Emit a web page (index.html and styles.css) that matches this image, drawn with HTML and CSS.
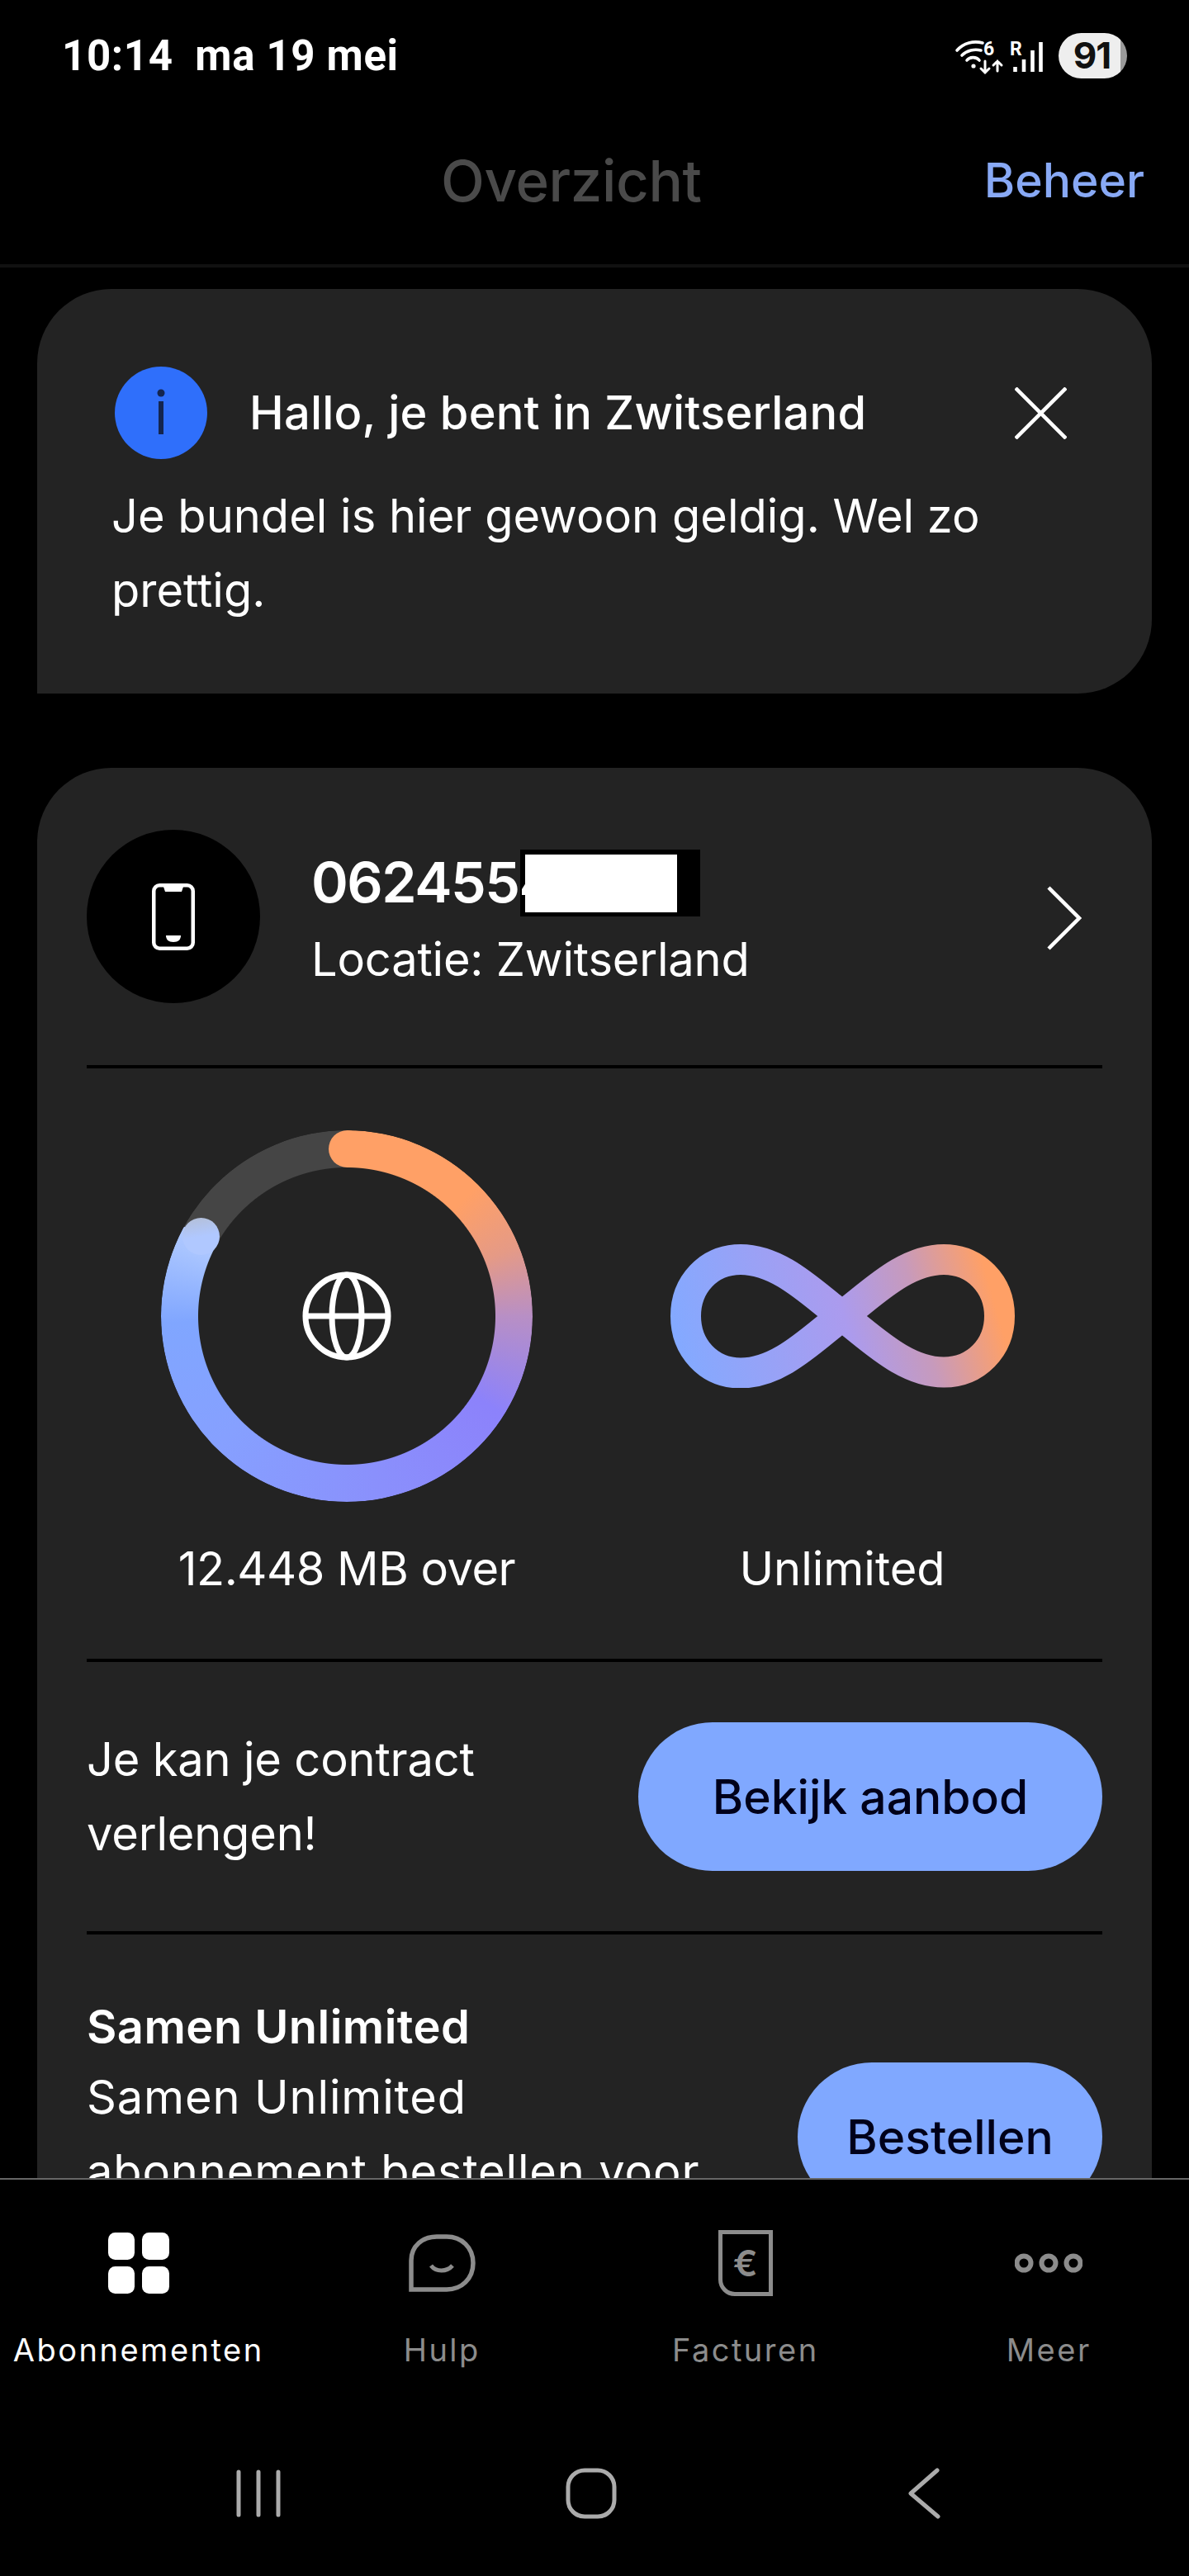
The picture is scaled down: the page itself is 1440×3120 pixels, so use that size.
FILE: index.html
```html
<!DOCTYPE html>
<html lang="nl">
<head>
<meta charset="utf-8">
<title>Overzicht</title>
<link rel="stylesheet" href="styles.css">
</head>
<body>
<div class="app">
  <header class="status">
    <span class="clock">10:14  ma 19 mei</span>
    <div class="status-right">
      <svg class="net" width="116" height="52" viewBox="1152 40 116 52" fill="none" stroke="#fff" stroke-linecap="round">
        <path d="M1158 59C1166 50 1178 47 1189 50" stroke-width="3.6"/>
        <path d="M1164 65C1170 59 1179 57 1187 59" stroke-width="3.6"/>
        <path d="M1170 71C1173 67 1181 66 1185 71" stroke-width="3.6"/>
        <circle cx="1178" cy="78" r="2.6" fill="#fff" stroke="none"/>
        <path d="M1192 72V86M1187 81L1192 86L1197 81" stroke-width="3"/>
        <path d="M1207 84V72M1202 77L1207 72L1212 77" stroke-width="3"/>
        <text class="net-text" x="1190" y="65">6</text>
        <text class="net-text" x="1222" y="65">R</text>
        <path d="M1228.500 79V85M1239 70V85M1249.500 59V85M1259.500 49V85" stroke-width="4.600" stroke-linecap="butt"/>
      </svg>
      <span class="battery">91</span>
    </div>
  </header>

  <div class="topbar">
    <h1 class="page-title">Overzicht</h1>
    <a class="manage">Beheer</a>
  </div>

  <main class="content">
    <section class="card notice">
      <div class="notice-head">
        <svg class="info" width="112" height="112" viewBox="0 0 112 112">
          <circle cx="56" cy="56" r="56" fill="#2f6ffb"/>
          <circle cx="56" cy="32" r="4.500" fill="#14254f"/>
          <rect x="53" y="42" width="6" height="40" fill="#14254f"/>
        </svg>
        <h2 class="notice-title">Hallo, je bent in Zwitserland</h2>
        <svg class="close" width="63" height="63" viewBox="0 0 63 63" fill="none" stroke="#fff" stroke-width="4.500">
          <path d="M1 1L62 62M62 1L1 62"/>
        </svg>
      </div>
      <p class="notice-text">Je bundel is hier gewoon geldig. Wel zo prettig.</p>
    </section>

    <section class="card plan">
      <div class="line-row">
        <div class="avatar">
          <svg width="52" height="81" viewBox="0 0 52 81" fill="none" stroke="#fff" stroke-width="4.500">
            <rect x="2.250" y="2.250" width="47.500" height="76.500" rx="7"/>
            <path d="M14 4H38L36 10H16Z" fill="#fff" stroke="none"/>
            <path d="M17 63H35C35 68 32 71 26 71C20 71 17 68 17 63Z" fill="#fff" stroke="none"/>
          </svg>
        </div>
        <div class="line-info">
          <div class="number"><span class="redact-back"></span>0624554<span class="redact-front"></span></div>
          <div class="location">Locatie: Zwitserland</div>
        </div>
        <svg class="chevron" width="42" height="78" viewBox="0 0 42 78" fill="none" stroke="#fff" stroke-width="4.500">
          <path d="M2 2L39 39L2 76"/>
        </svg>
      </div>

      <div class="usage">
        <div class="meter">
          <div class="meter-visual">
            <div class="ring">
              <div class="ring-track"></div>
              <span class="cap cap-start"></span>
              <span class="cap cap-end"></span>
              <svg class="globe" width="108" height="108" viewBox="0 0 108 108" fill="none" stroke="#fff" stroke-width="7">
                <circle cx="54" cy="54" r="50"/>
                <ellipse cx="54" cy="54" rx="18" ry="50"/>
                <path d="M4 54H104"/>
              </svg>
            </div>
          </div>
          <div class="meter-label meter-label-tight">12.448 MB over</div>
        </div>
        <div class="meter">
          <div class="meter-visual">
            <svg width="417" height="174" viewBox="812 1506 417 174" fill="none">
              <defs>
                <linearGradient id="inf" gradientUnits="userSpaceOnUse" x1="830" y1="1650" x2="1215" y2="1540">
                  <stop offset="0" stop-color="#84a9ff"/>
                  <stop offset="0.5" stop-color="#ab9bee"/>
                  <stop offset="0.72" stop-color="#c79abc"/>
                  <stop offset="0.95" stop-color="#ffa066"/>
                  <stop offset="1" stop-color="#ffa066"/>
                </linearGradient>
              </defs>
              <path stroke="url(#inf)" stroke-width="37" d="M1020 1593C985 1567 945 1524.500 897 1524.500C858 1524.500 830.500 1555 830.500 1593C830.500 1631 858 1662 897 1662C945 1662 985 1619 1020 1593C1055 1567 1095 1524.500 1143 1524.500C1182 1524.500 1210.500 1555 1210.500 1593C1210.500 1631 1182 1661 1143 1661C1095 1661 1055 1619 1020 1593Z"/>
            </svg>
          </div>
          <div class="meter-label">Unlimited</div>
        </div>
      </div>

      <div class="promo">
        <p class="promo-text">Je kan je contract<br>verlengen!</p>
        <a class="btn btn-wide">Bekijk aanbod</a>
      </div>

      <div class="offer">
        <div class="offer-text">
          <div class="offer-title">Samen Unlimited</div>
          <p class="offer-desc">Samen Unlimited<br>abonnement bestellen voor</p>
        </div>
        <a class="btn btn-order">Bestellen</a>
      </div>
    </section>
  </main>

  <footer class="bottom">
    <nav class="tabs">
      <a class="tab tab-active">
        <span class="tab-icon">
          <svg width="74" height="74" viewBox="0 0 74 74" fill="#fff">
            <rect width="32" height="33" rx="8.500"/>
            <rect x="41" width="33" height="33" rx="8.500"/>
            <rect y="41" width="32" height="33" rx="8.500"/>
            <rect x="41" y="41" width="33" height="33" rx="8.500"/>
          </svg>
        </span>
        Abonnementen
      </a>
      <a class="tab">
        <span class="tab-icon">
          <svg width="81" height="70" viewBox="0 0 81 70" fill="none" stroke="#8c8c8c" stroke-width="5.500">
            <path d="M3 67V32C3 14 17 3 34 3H46C64 3 78 16 78 35C78 54 64 67 46 67Z"/>
            <path d="M27 38C33 46 46 46 53 38" stroke-width="5"/>
          </svg>
        </span>
        Hulp
      </a>
      <a class="tab">
        <span class="tab-icon">
          <span class="invoice">€</span>
        </span>
        Facturen
      </a>
      <a class="tab">
        <span class="tab-icon">
          <svg width="82" height="24" viewBox="0 0 82 24" fill="none" stroke="#8c8c8c" stroke-width="6">
            <circle cx="11" cy="12" r="8.500"/>
            <circle cx="41" cy="12" r="8.500"/>
            <circle cx="71" cy="12" r="8.500"/>
          </svg>
        </span>
        Meer
      </a>
    </nav>
    <div class="sysnav">
      <svg width="54" height="58" viewBox="0 0 54 58" fill="none" stroke="#ababab" stroke-width="5" stroke-linecap="round">
        <path d="M3 3V55M27 3V55M51 3V55"/>
      </svg>
      <svg width="62" height="62" viewBox="0 0 62 62" fill="none" stroke="#ababab" stroke-width="5">
        <rect x="3" y="3" width="56" height="56" rx="20"/>
      </svg>
      <svg width="40" height="62" viewBox="0 0 40 62" fill="none" stroke="#ababab" stroke-width="5" stroke-linecap="round" stroke-linejoin="round">
        <path d="M36 3L4 31L37 59"/>
      </svg>
    </div>
  </footer>
</div>
</body>
</html>
```

FILE: styles.css
```css
* { box-sizing: border-box; margin: 0; padding: 0; }
html, body { background: #000; }
body {
  width: 1440px;
  height: 3120px;
  overflow: hidden;
  font-family: Inter, "Liberation Sans", sans-serif;
  color: #fff;
}
.app { height: 3120px; display: flex; flex-direction: column; overflow: hidden; }

/* status bar */
.status {
  height: 135px;
  flex: none;
  display: flex;
  align-items: center;
  justify-content: space-between;
  padding: 0 76px 0 75px;
}
.clock {
  font-family: Roboto, sans-serif;
  font-size: 51px;
  font-weight: 700;
  letter-spacing: 0.65px;
  white-space: pre;
}
.status-right { display: flex; align-items: center; margin-right: -1px; }
.net { margin-right: 13px; display: block; }
.net-text { font-family: Roboto, sans-serif; font-weight: 700; font-size: 23px; fill: #fff; stroke: none; }
.battery {
  width: 83px;
  height: 55px;
  border-radius: 28px;
  background: linear-gradient(90deg, #eee 90%, #9a9a9a 90%);
  color: #111;
  font-size: 44px;
  font-weight: 700;
  letter-spacing: -1px;
  line-height: 55px;
  text-align: center;
  padding-right: 2px;
}

/* top bar */
.topbar {
  height: 189px;
  flex: none;
  display: flex;
  align-items: center;
  justify-content: space-between;
  padding: 0 54px 18px 534px;
  border-bottom: 4px solid #111;
}
.page-title { font-size: 69px; font-weight: 500; letter-spacing: -0.4px; color: #4a4a4a; }
.manage { font-size: 57px; font-weight: 500; color: #88a9f5; }

/* content */
.content {
  flex: 1;
  min-height: 0;
  overflow: hidden;
  padding: 26px 45px 0;
  display: flex;
  flex-direction: column;
  gap: 90px;
}
.card { background: #232323; flex: none; }
.notice {
  height: 490px;
  border-radius: 90px 90px 90px 0;
  padding: 94px 103px 0 90px;
}
.notice-head { display: flex; align-items: center; }
.info { margin-left: 4px; flex: none; }
.notice-title { flex: 1; margin-left: 51px; font-size: 56px; font-weight: 500; letter-spacing: 0.2px; line-height: 90px; }
.close { flex: none; }
.notice-text { margin-top: 24px; font-size: 56px; line-height: 90px; }

.plan { border-radius: 90px 90px 0 0; padding: 0 60px; }
.line-row {
  height: 360px;
  display: flex;
  align-items: flex-start;
  padding-top: 75px;
}
.avatar {
  width: 210px;
  height: 210px;
  border-radius: 50%;
  background: #000;
  flex: none;
  display: flex;
  align-items: center;
  justify-content: center;
}
.line-info { flex: 1; margin-left: 62px; padding-top: 18px; }
.number {
  position: relative;
  isolation: isolate;
  font-size: 68px;
  font-weight: 600;
  letter-spacing: -1.500px;
  line-height: 90px;
  height: 94px;
}
.redact-back { position: absolute; left: 253px; top: 6px; width: 218px; height: 81px; background: #000; z-index: -1; }
.redact-front { position: absolute; left: 259px; top: 12px; width: 184px; height: 70px; background: #fff; }
.location { font-size: 56px; letter-spacing: -0.2px; line-height: 90px; }
.chevron { flex: none; margin: 68px 25px 0 0; }

.usage {
  display: grid;
  grid-template-columns: 630px 570px;
  padding-top: 75px;
  padding-bottom: 64px;
  border-top: 4px solid #000;
  border-bottom: 4px solid #000;
}
.meter { display: flex; flex-direction: column; align-items: center; }
.meter-visual { height: 450px; display: flex; align-items: center; justify-content: center; }
.meter-label { margin-top: 36px; font-size: 56px; line-height: 90px; }
.meter-label-tight { letter-spacing: -0.5px; }

.ring { position: relative; width: 450px; height: 450px; display: flex; align-items: center; justify-content: center; }
.ring-track {
  position: absolute;
  inset: 0;
  border-radius: 50%;
  background: conic-gradient(
    #ffa066 0deg, #ffa066 45deg, #e59a86 68deg, #b88fc5 90deg,
    #8c82fb 122deg, #8a90fc 170deg, #86a0ff 225deg, #80a6ff 268deg,
    #a8c4ff 292deg, #b0c8ff 298.700deg, #454545 298.700deg, #454545 360deg
  );
  -webkit-mask: radial-gradient(closest-side, transparent 179.500px, #000 180.500px);
  mask: radial-gradient(closest-side, transparent 179.500px, #000 180.500px);
}
.cap { position: absolute; width: 45px; height: 45px; border-radius: 50%; }
.cap-start { left: 202.500px; top: 0; background: #ffa066; }
.cap-end { left: 25.500px; top: 105.500px; background: linear-gradient(170deg, #b4c0da 5%, #b0c8ff 50%); }
.globe { position: relative; }

.promo {
  height: 330px;
  display: flex;
  align-items: center;
  justify-content: space-between;
  border-bottom: 4px solid #000;
}
.promo-text { font-size: 56px; letter-spacing: -0.2px; line-height: 90px; }
.btn {
  height: 180px;
  border-radius: 90px;
  background: #80a8ff;
  color: #00001a;
  font-size: 57px;
  font-weight: 500;
  display: flex;
  align-items: center;
  justify-content: center;
  flex: none;
}
.btn-wide { width: 562px; }
.btn-order { width: 369px; margin-top: 83px; }

.offer { display: flex; justify-content: space-between; padding-top: 72px; }
.offer-title { font-size: 56px; font-weight: 600; letter-spacing: 0.45px; line-height: 80px; }
.offer-desc { font-size: 56px; letter-spacing: 0.85px; line-height: 90px; }

/* bottom */
.bottom { height: 482px; flex: none; background: #000; border-top: 2px solid #666; position: relative; z-index: 1; }
.tabs {
  display: grid;
  grid-template-columns: repeat(4, 367.500px);
  margin-left: -16px;
  padding-top: 61px;
}
.tab {
  display: flex;
  flex-direction: column;
  align-items: center;
  color: #8c8c8c;
  font-size: 38px;
  line-height: 48px;
  letter-spacing: 2.500px;
}
.tab-active { color: #fff; }
.tab-icon { height: 80px; margin-bottom: 41px; display: flex; align-items: center; justify-content: center; }
.invoice {
  width: 66px;
  height: 80px;
  border: 5.500px solid #8c8c8c;
  border-bottom-left-radius: 20px;
  color: #8c8c8c;
  font-size: 44px;
  font-weight: 600;
  letter-spacing: 0;
  display: flex;
  align-items: center;
  justify-content: center;
}
.sysnav {
  display: grid;
  grid-template-columns: repeat(3, 403px);
  justify-content: center;
  justify-items: center;
  align-items: center;
  padding-right: 8px;
  margin-top: 119px;
}
```
